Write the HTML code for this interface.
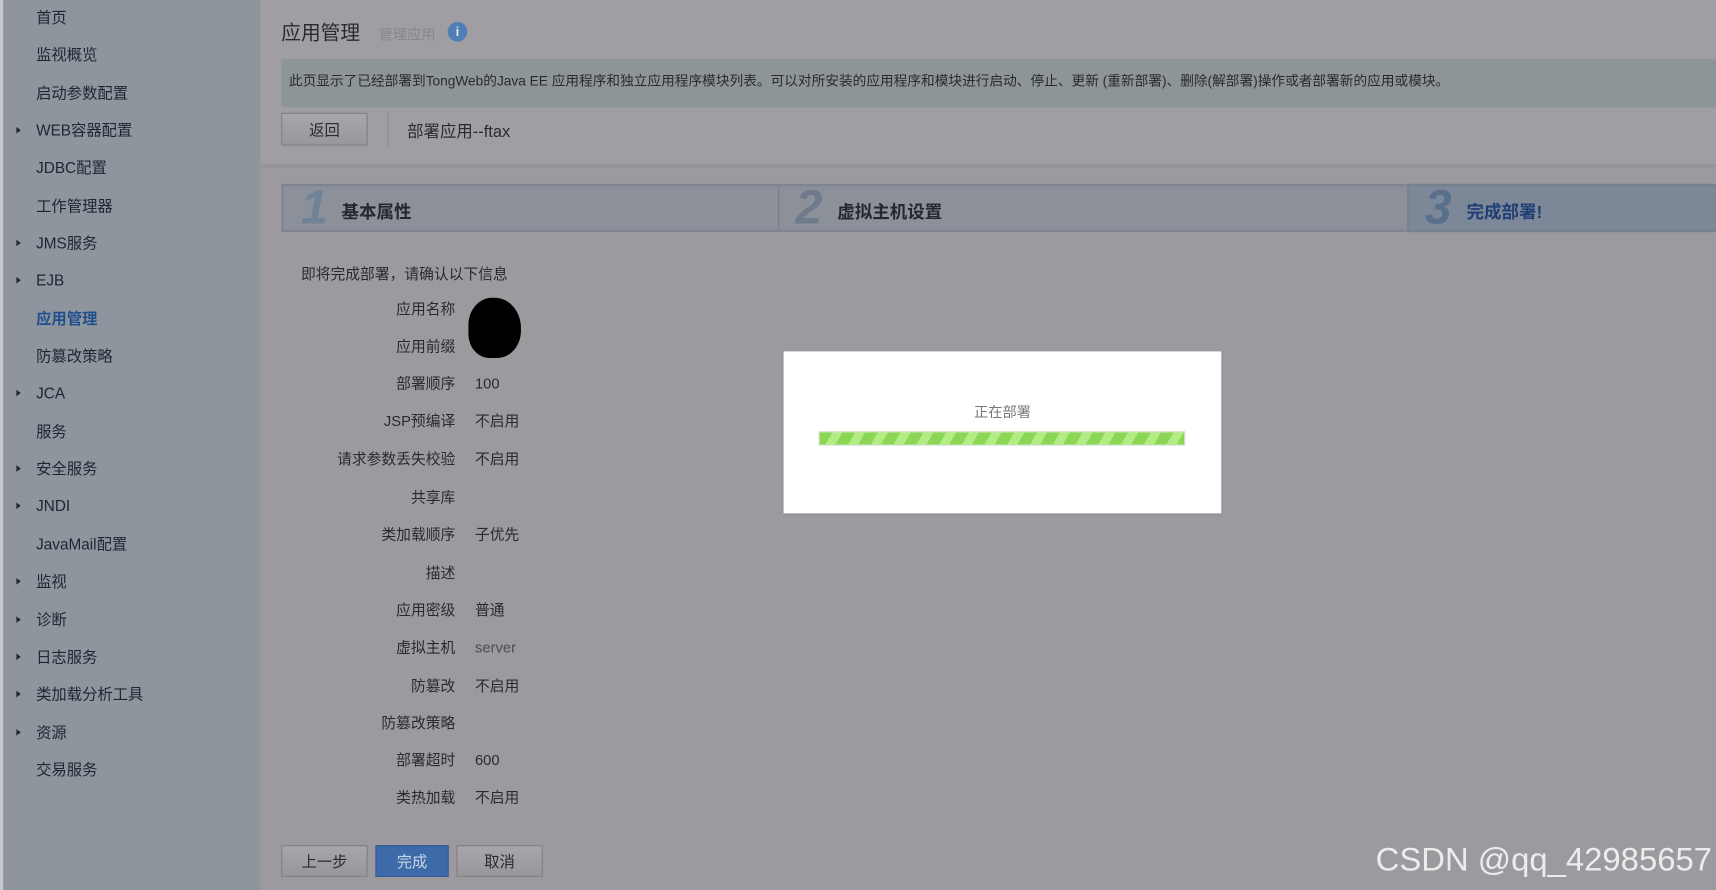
<!DOCTYPE html>
<html><head><meta charset="utf-8"><style>
html,body{margin:0;padding:0;width:1716px;height:890px;overflow:hidden;background:#9c9a9e}
#w{position:absolute;left:0;top:0;width:1568px;height:813px;transform:scale(1.09439,1.09471);transform-origin:0 0;font-family:"Liberation Sans","Noto Sans CJK SC",sans-serif;}
.a{position:absolute}
#side{left:3px;top:0;width:235px;height:813px;background:#8e959c}
.si{position:absolute;left:33px;font-size:14px;color:#1d2633;line-height:16px}
.ar{position:absolute;left:15px;width:0;height:0;border-left:4px solid #1d2633;border-top:3px solid transparent;border-bottom:3px solid transparent}
.lb{position:absolute;width:160px;left:256px;text-align:right;font-size:13.5px;color:#2a2a2c;line-height:16px}
.vl{position:absolute;left:434px;font-size:13.5px;color:#2a2a2c;line-height:16px}
.btn{position:absolute;top:772px;height:29px;border:1px solid #7f7f82;background:linear-gradient(#a7a6aa,#98979b);font-size:14px;line-height:29px;text-align:center;color:#2a2a2c;box-sizing:border-box}
</style></head><body><div id="w">
<div class="a" style="left:0;top:0;width:3px;height:813px;background:#c9c9cc"></div>
<div class="a" id="side"></div>
<div class="a" style="left:238px;top:0;width:1330px;height:150px;background:#a09ea2"></div>
<div class="a" style="left:238px;top:150px;width:1330px;height:3px;background:#959398"></div>

<div class="ar" style="top:116px"></div><div class="ar" style="top:219px"></div><div class="ar" style="top:253px"></div><div class="ar" style="top:356px"></div><div class="ar" style="top:425px"></div><div class="ar" style="top:459px"></div><div class="ar" style="top:528px"></div><div class="ar" style="top:563px"></div><div class="ar" style="top:597px"></div><div class="ar" style="top:631px"></div><div class="ar" style="top:666px"></div>
<div class="si" style="top:8px">首页</div>
<div class="si" style="top:42px">监视概览</div>
<div class="si" style="top:77px">启动参数配置</div>
<div class="si" style="top:111px">WEB容器配置</div>
<div class="si" style="top:145px">JDBC配置</div>
<div class="si" style="top:180px">工作管理器</div>
<div class="si" style="top:214px">JMS服务</div>
<div class="si" style="top:248px">EJB</div>
<div class="si" style="top:283px;color:#1f4f8f;font-weight:bold">应用管理</div>
<div class="si" style="top:317px">防篡改策略</div>
<div class="si" style="top:351px">JCA</div>
<div class="si" style="top:386px">服务</div>
<div class="si" style="top:420px">安全服务</div>
<div class="si" style="top:454px">JNDI</div>
<div class="si" style="top:489px">JavaMail配置</div>
<div class="si" style="top:523px">监视</div>
<div class="si" style="top:558px">诊断</div>
<div class="si" style="top:592px">日志服务</div>
<div class="si" style="top:626px">类加载分析工具</div>
<div class="si" style="top:661px">资源</div>
<div class="si" style="top:695px">交易服务</div>

<div class="a" style="left:257px;top:16px;font-size:18px;color:#2a2a2c">应用管理</div>
<div class="a" style="left:346px;top:21px;font-size:13px;color:#88878b">管理应用</div>
<div class="a" style="left:409px;top:20px;width:18px;height:18px;border-radius:50%;background:#4f7fb4;color:#dfe7f0;font-size:12px;font-weight:bold;text-align:center;line-height:18px">i</div>
<div class="a" style="left:257px;top:54px;width:1311px;height:44px;background:#8d9597"></div>
<div class="a" style="left:264px;top:63px;font-size:12.5px;color:#2a2a2c;white-space:nowrap">此页显示了已经部署到TongWeb的Java EE 应用程序和独立应用程序模块列表。可以对所安装的应用程序和模块进行启动、停止、更新 (重新部署)、删除(解部署)操作或者部署新的应用或模块。</div>
<div class="btn" style="left:257px;top:103px;width:79px;height:30px;line-height:30px">返回</div>
<div class="a" style="left:354px;top:102px;width:1px;height:33px;background:#8c8b8f"></div>
<div class="a" style="left:372px;top:109px;font-size:15px;color:#2a2a2c">部署应用--ftax</div>

<div class="a" style="left:257px;top:168px;width:1311px;height:44px;background:#8b9099;border-top:2px solid #7e8590;border-bottom:2px solid #7e8590;box-sizing:border-box"></div>
<div class="a" style="left:257px;top:168px;width:2px;height:44px;background:#7e8590"></div>
<div class="a" style="left:1287px;top:168px;width:281px;height:44px;background:#7c8898;border-top:2px solid #75818f;border-bottom:2px solid #75818f;box-sizing:border-box"></div>
<div class="a" style="left:711px;top:170px;width:1px;height:40px;background:#767c86"></div>
<div class="a" style="left:1286px;top:170px;width:1px;height:40px;background:#6d7888"></div>
<div class="a" style="left:275px;top:165px;font-size:44px;font-style:italic;font-weight:bold;color:#6f8296">1</div>
<div class="a" style="left:312px;top:180px;font-size:16px;font-weight:bold;color:#232830">基本属性</div>
<div class="a" style="left:727px;top:165px;font-size:44px;font-style:italic;font-weight:bold;color:#6f7b8a">2</div>
<div class="a" style="left:765px;top:180px;font-size:16px;font-weight:bold;color:#232830">虚拟主机设置</div>
<div class="a" style="left:1302px;top:165px;font-size:44px;font-style:italic;font-weight:bold;color:#58708c">3</div>
<div class="a" style="left:1340px;top:180px;font-size:16px;font-weight:bold;color:#1f3f75">完成部署!</div>

<div class="a" style="left:275px;top:239px;font-size:13.5px;color:#2a2a2c">即将完成部署，请确认以下信息</div>
<div class="lb" style="top:275px">应用名称</div>
<div class="lb" style="top:309px">应用前缀</div>
<div class="lb" style="top:343px">部署顺序</div><div class="vl" style="top:343px">100</div>
<div class="lb" style="top:377px">JSP预编译</div><div class="vl" style="top:377px">不启用</div>
<div class="lb" style="top:412px">请求参数丢失校验</div><div class="vl" style="top:412px">不启用</div>
<div class="lb" style="top:447px">共享库</div>
<div class="lb" style="top:481px">类加载顺序</div><div class="vl" style="top:481px">子优先</div>
<div class="lb" style="top:516px">描述</div>
<div class="lb" style="top:550px">应用密级</div><div class="vl" style="top:550px">普通</div>
<div class="lb" style="top:584px">虚拟主机</div><div class="vl" style="top:584px;color:#4a4d55">server</div>
<div class="lb" style="top:619px">防篡改</div><div class="vl" style="top:619px">不启用</div>
<div class="lb" style="top:653px">防篡改策略</div>
<div class="lb" style="top:687px">部署超时</div><div class="vl" style="top:687px">600</div>
<div class="lb" style="top:721px">类热加载</div><div class="vl" style="top:721px">不启用</div>
<div class="a" style="left:428px;top:272px;width:48px;height:55px;background:#000;border-radius:45% 50% 45% 40%"></div>

<div class="btn" style="left:257px;width:79px">上一步</div>
<div class="btn" style="left:343px;width:67px;background:#3d6aa8;border-color:#325b92;color:#c9d5e6">完成</div>
<div class="btn" style="left:417px;width:79px">取消</div>

<div class="a" style="left:716px;top:321px;width:400px;height:148px;background:#fff;box-shadow:0 1px 2px #888"></div>
<div class="a" style="left:716px;top:366px;width:400px;text-align:center;font-size:13px;color:#777">正在部署</div>
<div class="a" style="left:748px;top:394px;width:335px;height:13px;background:repeating-linear-gradient(120deg,#8bd655 0 10px,#b2ec82 10px 18px);border:1px solid #c7dcbb;box-sizing:border-box"></div>

<div class="a" style="left:1257px;top:769px;font-size:30px;color:#ececec;white-space:nowrap">CSDN @qq_42985657</div>
</div></body></html>
